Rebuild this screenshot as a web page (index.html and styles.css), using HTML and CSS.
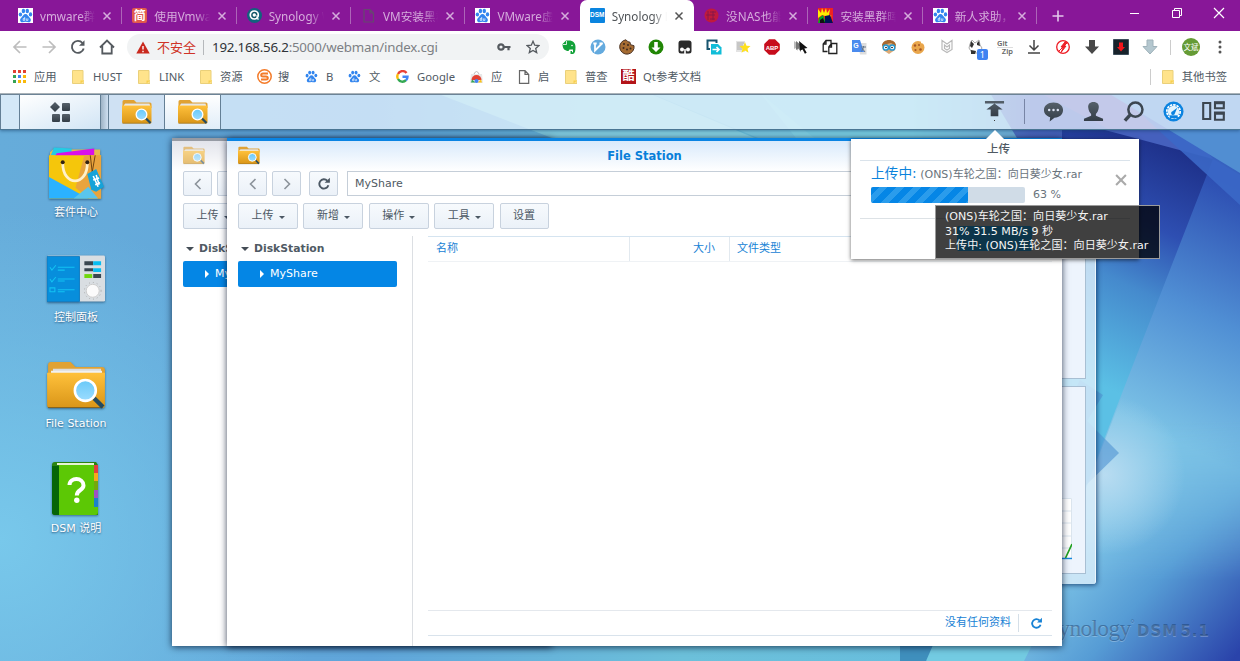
FILE: index.html
```
<!DOCTYPE html>
<html lang="zh-CN">
<head>
<meta charset="utf-8">
<title>Synology DiskStation</title>
<link rel="stylesheet" href="styles.css">
</head>
<body>
<svg class="defs" width="0" height="0">
  <defs>
    <linearGradient id="gold" x1="0" y1="0" x2="0" y2="1"><stop offset="0" stop-color="#ffc13b"/><stop offset="1" stop-color="#d99518"/></linearGradient>
    <linearGradient id="lens" x1="0" y1="0" x2="0" y2="1"><stop offset="0" stop-color="#68c9f8"/><stop offset="1" stop-color="#9cdcff"/></linearGradient>
    <linearGradient id="slate" x1="0" y1="0" x2="0" y2="1"><stop offset="0" stop-color="#55606a"/><stop offset="1" stop-color="#333d47"/></linearGradient>
    <symbol id="folder" viewBox="0 0 60 50">
      <path d="M1 4q0-3 3-3h20l5 5h27q3 0 3 3v8H1z" fill="#e0a234"/>
      <path d="M6 8h49v5H6z" fill="#ddd"/><path d="M4 10h52v4H4z" fill="#f1f1f1"/>
      <path d="M0 12h59v33q0 3-3 3H3q-3 0-3-3z" fill="url(#gold)"/>
      <path d="M1 47.500h56" stroke="#7f6021" stroke-width="1"/>
      <path d="M48 38l9 9" stroke="#244a60" stroke-width="4.5"/>
      <circle cx="39" cy="30" r="10.7" fill="url(#lens)" stroke="#fff" stroke-width="2.6"/>
    </symbol>
    <symbol id="paw" viewBox="0 0 15 15">
      <g fill="#3285ee"><ellipse cx="2.4" cy="6.5" rx="1.7" ry="2.1"/><ellipse cx="5.4" cy="3" rx="1.700" ry="2.2"/><ellipse cx="9.3" cy="3" rx="1.700" ry="2.2"/><ellipse cx="12.5" cy="6.4" rx="1.7" ry="2.1"/>
      <path d="M7.5 6c2 0 2.500 2.200 4 3.400 2.300 1.900 1.500 4.800-.8 4.800-1.100 0-2-.4-3.200-.4s-2.100.4-3.200.4c-2.300 0-3.100-2.900-.8-4.800C5 8.200 5.500 6 7.500 6z"/></g>
      <path d="M6.700 9v3.400h-1.500v-1.800h1.500M8.300 10.400v2h1.600v-2" fill="none" stroke="#fff" stroke-width=".7"/>
    </symbol>
    <symbol id="note" viewBox="0 0 12 14"><path d="M.5.500h10.500v9l1 1v3H.5z" fill="#ffe38b" stroke="#ead07a"/><path d="M8.500 13.500v-3H12" fill="#f8cf4e"/></symbol>
    <symbol id="x" viewBox="0 0 10 10"><path d="M1.500 1.500l7 7m0-7l-7 7" fill="none" stroke="currentColor" stroke-width="1.500"/></symbol>
    <symbol id="reload" viewBox="0 0 16 16"><path d="M13 9.500A5.300 5.300 0 1 1 11.700 4.200" fill="none" stroke="currentColor" stroke-width="2.200"/><path d="M8.700 6.700h6V.8z" fill="currentColor"/></symbol>
  </defs>
</svg>

<header class="browser">
  <div class="tabs">
    <div class="tab"><span class="fav white"><svg><use href="#paw"/></svg></span><span class="ttl">vmware群晖</span><svg class="close"><use href="#x"/></svg></div>
    <div class="tab"><span class="fav jian">简</span><span class="ttl">使用Vmware</span><svg class="close"><use href="#x"/></svg></div>
    <div class="tab"><span class="fav"><svg viewBox="0 0 15 15"><circle cx="7.500" cy="7.500" r="7.500" fill="#12627d"/><circle cx="7.300" cy="7" r="4" fill="#156" stroke="#fff" stroke-width="1.700"/><circle cx="7.300" cy="7" r="1.700" fill="#fff"/><path d="M10 7v4h2" stroke="#fff" fill="none"/></svg></span><span class="ttl">Synology W</span><svg class="close"><use href="#x"/></svg></div>
    <div class="tab"><span class="fav"><svg viewBox="0 0 15 15"><path d="M3 1.500h6l3.500 3.500v9H3zM9 1.500V5h3.500" fill="none" stroke="#66486f" stroke-width="1.200"/></svg></span><span class="ttl">VM安装黑群</span><svg class="close"><use href="#x"/></svg></div>
    <div class="tab nosep"><span class="fav white"><svg><use href="#paw"/></svg></span><span class="ttl">VMware虚拟</span><svg class="close"><use href="#x"/></svg></div>
    <div class="tab active"><span class="fav dsm">DSM</span><span class="ttl">Synology Di</span><svg class="close"><use href="#x"/></svg></div>
    <div class="tab"><span class="fav"><svg viewBox="0 0 15 15"><circle cx="7.500" cy="7.500" r="7" fill="#c01a3c"/><path d="M4 3v9M6 4h6M6 7h5M9 3v9M6 11h5M2 7h4" stroke="#84174a" stroke-width=".9"/></svg></span><span class="ttl">没NAS也能</span><svg class="close"><use href="#x"/></svg></div>
    <div class="tab"><span class="fav"><svg viewBox="0 0 15 15"><path fill="#e22" d="M0 0h15v15H0z"/><path d="M0 1l3 4 1-5 2 5 2-5 1 5 3-4-1 6 3 1-4 1-6-2-4 3z" fill="#fe0"/><path d="M0 15l1-5 4-3 3 8z" fill="#0a2"/><path d="M7 15l0-7 5-1 3 8z" fill="#015"/><path d="M2 15v-3l3-2 2 5z" fill="#111"/></svg></span><span class="ttl">安装黑群晖</span><svg class="close"><use href="#x"/></svg></div>
    <div class="tab"><span class="fav white"><svg><use href="#paw"/></svg></span><span class="ttl">新人求助，c</span><svg class="close"><use href="#x"/></svg></div>
    <svg class="plus" viewBox="0 0 12 12"><path d="M6 .5v11M.5 6h11" stroke="#e2c8ea" stroke-width="1.600"/></svg>
    <div class="winctl">
      <svg viewBox="0 0 12 12"><path d="M1 6.500h9" stroke="#fff"/></svg>
      <svg viewBox="0 0 12 12"><path d="M1.500 3.500h7v7h-7zM3.500 3V1.500h7v7H9" fill="none" stroke="#fff"/></svg>
      <svg viewBox="0 0 12 12"><path d="M1 1l10 10M11 1L1 11" stroke="#fff" stroke-width="1.200"/></svg>
    </div>
  </div>

  <div class="toolbar">
    <div class="nav">
      <svg viewBox="0 0 16 16"><path d="M14.500 8H2.500M8 2L2 8l6 6" fill="none" stroke="#bdbdbd" stroke-width="1.700"/></svg>
      <svg viewBox="0 0 16 16"><path d="M1.500 8h12M8 2l6 6-6 6" fill="none" stroke="#bdbdbd" stroke-width="1.700"/></svg>
      <svg viewBox="0 0 16 16"><path d="M13.700 9.500A6 6 0 1 1 12.500 4" fill="none" stroke="#555a5f" stroke-width="1.900"/><path d="M9 6.800h5.500V1.300z" fill="#555a5f"/></svg>
      <svg viewBox="0 0 16 16"><path d="M1 8.500L8 1.500l7 7M3.300 7v7.500h9.400V7" fill="none" stroke="#555a5f" stroke-width="1.800"/></svg>
    </div>
    <div class="omnibox">
      <svg class="warn" viewBox="0 0 14 13"><path d="M7 .5L13.700 12.500H.3z" fill="#c9291e"/><path d="M7 5v3.500M7 9.700v1.500" stroke="#fff" stroke-width="1.400"/></svg>
      <span class="unsafe">不安全</span><i></i>
      <span class="url"><b>192.168.56.2</b>:5000/webman/index.cgi</span>
      <svg class="key" viewBox="0 0 14 10"><circle cx="4" cy="5" r="2.700" fill="none" stroke="#555a5f" stroke-width="2.200"/><path d="M6.500 5h7M11.500 5v3.200" stroke="#555a5f" stroke-width="2.200"/></svg>
      <svg class="star" viewBox="0 0 14 14"><path d="M7 1.300l1.700 3.900 4.200.4-3.200 2.800 1 4.200L7 10.400l-3.700 2.200 1-4.200L1.100 5.600l4.200-.4z" fill="none" stroke="#555a5f" stroke-width="1.300"/></svg>
    </div>
    <div class="exts">
      <svg viewBox="0 0 16 16"><path d="M1.500 5L5 1.500h3C12 1.500 14.500 4 14.500 8c0 4-.5 6.500-2.500 7H9.500v-3h1.500v1.300h1V10.500H8.500l-1 1.500C4 12 1.500 10 1.500 5z" fill="#12a239"/><path d="M2 5.500h3.500V2" fill="none" stroke="#fff" stroke-width=".8"/><circle cx="11" cy="6.500" r=".8" fill="#fff"/></svg>
      <svg viewBox="0 0 16 16"><circle cx="8" cy="8" r="7.500" fill="#64aade"/><path d="M5 4v7.500L12.500 4M3.300 4.500h3.400M9.500 4.500h3.200" fill="none" stroke="#fff" stroke-width="1.800"/></svg>
      <svg viewBox="0 0 16 16"><path d="M7 .8l2 2 2 .4.500 2.500 3.500 1a7.200 7.200 0 1 1-8-5.900z" fill="#a56b31" stroke="#4c3426"/><g fill="#3e291e"><circle cx="5" cy="5" r="1"/><circle cx="9" cy="6" r="1"/><circle cx="4.500" cy="9" r="1"/><circle cx="8" cy="10.500" r="1"/><circle cx="11.500" cy="9.500" r="1"/></g></svg>
      <svg viewBox="0 0 16 16"><circle cx="8" cy="8" r="7.500" fill="#218605"/><path d="M8 13L3.500 8.500h2.700V3h3.600v5.500h2.700z" fill="#fff"/></svg>
      <svg viewBox="0 0 16 16"><rect x="1.500" y="1.500" width="13" height="13" rx="2.500" fill="#2b2b2b"/><circle cx="5" cy="10.500" r="2" fill="#fff"/><circle cx="11" cy="10.500" r="2" fill="#fff"/><path d="M7.200 10h1.600v5H7.200z" fill="#fff"/></svg>
      <svg viewBox="0 0 16 16"><path d="M4 10H1.500V1.500h9V4" fill="none" stroke="#17546f" stroke-width="2"/><path d="M5 5h7l3.500 3.500v7H5z" fill="#11bdd8"/><path d="M6.500 10.500h6M10.500 8l2.500 2.500-2.500 2.500" stroke="#fff" stroke-width="1.700" fill="none"/></svg>
      <svg viewBox="0 0 16 16"><path d="M1 2h9v11H1z" fill="#e3e3e3"/><path d="M2 4h7M2 6h6M2 8h7M2 10h5" stroke="#aaa"/><path d="M10 3l1.500 3.700 4 .3-3 2.700 1 4L10 11.500 6.500 13.700l1-4-3-2.700 4-.3z" fill="#ffe01b"/></svg>
      <svg viewBox="0 0 16 16"><path d="M5 .2h6L15.800 5v6L11 15.800H5L.2 11V5z" fill="#c70d1c"/><text x="8" y="10.600" class="abp">ABP</text></svg>
      <svg viewBox="0 0 16 16"><path d="M1 2v8l2-1 2 3V5z" fill="#bbb"/><path d="M3 2v9l2.200-1.500L8 13V6z" fill="#777"/><path d="M6 2l8.500 7-3.200.4 2.400 4.300-1.800 1-2.300-4.300-2.400 1z" fill="#111"/></svg>
      <svg viewBox="0 0 16 16"><path d="M5.500 12.500H1.200V5L4 1.500h5v3M4 1.500V5H1.200M6.800 8l2.700-3.500h5.300v10h-8zM9.500 4.500V8H6.800" fill="none" stroke="#222" stroke-width="1.300"/></svg>
      <svg viewBox="0 0 16 16"><path d="M7 4h8.500v11.500H9z" fill="#ddd"/><path d="M1 1h8l4 12H1z" fill="#4a8bee"/><text x="5" y="9" class="tr">G</text><path d="M10 8h5M12.500 7v1.500l-2 4M11 9l3 4" stroke="#678" fill="none"/></svg>
      <svg viewBox="0 0 16 16"><path d="M1 7C1 0 15 0 15 7l-1 4-6 4-6-4z" fill="#dcaa76"/><path d="M1 7C1-1 15-1 15 7l-5-3-4 1z" fill="#a8692f"/><circle cx="4.800" cy="8.500" r="2.600" fill="#fff" stroke="#2496cf" stroke-width="1.500"/><circle cx="11.200" cy="8.500" r="2.600" fill="#fff" stroke="#2496cf" stroke-width="1.500"/><circle cx="5" cy="8.500" r=".8"/><circle cx="11" cy="8.500" r=".8"/></svg>
      <svg viewBox="0 0 16 16"><circle cx="8" cy="8.500" r="6.500" fill="#e9a64b"/><circle cx="12.500" cy="3" r="1.600" fill="#fff"/><g fill="#a75624"><circle cx="5" cy="6.500" r="1.200"/><circle cx="9" cy="6" r="1"/><circle cx="5.500" cy="11" r="1.100"/><circle cx="10.500" cy="10.500" r="1.300"/></g></svg>
      <svg viewBox="0 0 16 16"><path d="M3 1.500l5 3.500 5-3.500v9L8 13.500l-5-3zM5.500 6v3.500L8 11l2.500-1.500V6L8 8z" fill="none" stroke="#b9b9b9" stroke-width="1.200"/></svg>
      <span class="badged"><svg viewBox="0 0 16 16"><path d="M2 5l2-4 3 3 4-3 1 5 2 3-3 5H4L1 9z" fill="#fff" stroke="#aaa"/><path d="M3 2l3 3-2 4-2-2zM9 4l2-2 1 5-3-1zM3 11l5 1-1 3H3z" fill="#333"/></svg><em>1</em></span>
      <span class="gitzip"><u>Git</u><u>Zip</u></span>
      <svg viewBox="0 0 16 16"><path d="M8 1v9.500M3.500 6.500L8 11l4.500-4.500M2 14h12" fill="none" stroke="#444" stroke-width="1.500"/></svg>
      <svg viewBox="0 0 16 16"><circle cx="8" cy="8" r="6.300" fill="#fff" stroke="#ee1c24" stroke-width="1.300"/><path d="M10 3L6 8h2.500L6 13.500 11 7H8.500l3-4zM3.500 12.500l9-9" fill="#ee1c24" stroke="#ee1c24"/></svg>
      <svg viewBox="0 0 16 16"><path d="M5 1h6v6.500h4L8 15 1 7.500h4z" fill="#484848"/></svg>
      <svg viewBox="0 0 16 16"><path fill="#18222b" stroke="#3c4d5a" d="M.5.500h15v15H.5z"/><path d="M6 3.500h4V8h2l-4 4.500L4 8h2z" fill="#f3151b"/></svg>
      <svg viewBox="0 0 16 16"><path d="M5 1h6v6.500h4L8 15 1 7.500h4z" fill="#b4c7cf" stroke="#9fb2ba"/></svg>
    </div>
    <i class="bar"></i>
    <span class="avatar">文斌</span>
    <svg class="dots" viewBox="0 0 4 14"><g fill="#555"><circle cx="2" cy="2" r="1.500"/><circle cx="2" cy="7" r="1.500"/><circle cx="2" cy="12" r="1.500"/></g></svg>
  </div>

  <nav class="marks">
    <a class="w59"><svg viewBox="0 0 13 13"><path d="M0 0h3v3H0zM5 0h3v3H5zM10 0h3v3h-3z" fill="#e34133"/><path d="M0 5h3v3H0z" fill="#35a353"/><path d="M5 5h3v3H5z" fill="#4284f3"/><path d="M10 5h3v3h-3zM5 10h3v3H5zM10 10h3v3h-3z" fill="#f9b90a"/><path d="M0 10h3v3H0z" fill="#35a353"/></svg><span>应用</span></a>
    <a class="w66"><svg class="nt"><use href="#note"/></svg><span class="far">HUST</span></a>
    <a class="w62"><svg class="nt"><use href="#note"/></svg><span class="far">LINK</span></a>
    <a class="w57"><svg class="nt"><use href="#note"/></svg><span>资源</span></a>
    <a class="w48"><svg class="big" viewBox="0 0 15 15"><circle cx="7.500" cy="7.500" r="6.700" fill="#fff" stroke="#f47b29" stroke-width="1.500"/><path d="M11 4.500H6q-1.800 0-1.800 1.500T6 7.500h3q1.800 0 1.800 1.500T9 10.500H4" fill="none" stroke="#f47b29" stroke-width="2"/></svg><span class="near">搜</span></a>
    <a class="w43"><svg><use href="#paw"/></svg><span>B</span></a>
    <a class="w48"><svg><use href="#paw"/></svg><span>文</span></a>
    <a class="w74"><svg viewBox="0 0 13 13"><g fill="none" stroke-width="2.400"><path d="M2 4A5 5 0 0 1 10.500 3" stroke="#ea4335"/><path d="M2 4a5 5 0 0 0 0 5" stroke="#fbbc05"/><path d="M2 9a5 5 0 0 0 8 1.200" stroke="#34a853"/><path d="M10 10.300A5 5 0 0 0 11.500 6.700H6.500" stroke="#4285f4"/></g></svg><span>Google</span></a>
    <a class="w48"><svg viewBox="0 0 13 13"><path d="M1 4h11l1 9H0z" fill="#e8e8e8"/><path d="M4 4q2.500-5 5 0" fill="none" stroke="#bbb"/><path d="M1.500 10a5 5 0 0 1 10 0z" fill="#e34133"/><path d="M1 12.500l1-3 3.500 3z" fill="#35a353"/><path d="M12 12.500l-1-3-3.500 3z" fill="#fbc116"/><circle cx="6.500" cy="11" r="2" fill="#4284f3"/></svg><span>应</span></a>
    <a class="w47"><svg class="nt" viewBox="0 0 12 14"><path d="M1.500.7h5.500l3.700 3.700v9H1.500zM7 .7v3.700h3.700" fill="none" stroke="#666" stroke-width="1.200"/></svg><span>启</span></a>
    <a class="w56"><svg class="nt"><use href="#note"/></svg><span>普查</span></a>
    <a class="ku"><b>酷</b><span>Qt参考文档</span></a>
    <a class="other"><svg class="nt"><use href="#note"/></svg><span>其他书签</span></a>
  </nav>
</header>

<main class="desktop">
  <svg class="wall" viewBox="0 93 1240 568" preserveAspectRatio="none">
    <defs>
      <linearGradient id="w0" x1="0" y1="0" x2="1" y2="0"><stop offset="0" stop-color="#66acda"/><stop offset=".3" stop-color="#60a5da"/><stop offset=".55" stop-color="#6cc0da"/><stop offset=".73" stop-color="#68bedd"/><stop offset=".83" stop-color="#4864bb"/><stop offset="1" stop-color="#2c49aa"/></linearGradient>
      <radialGradient id="w1" gradientUnits="userSpaceOnUse" cx="0" cy="540" r="330"><stop offset="0" stop-color="#78c8eb"/><stop offset="1" stop-color="#78c8eb" stop-opacity="0"/></radialGradient>
      <linearGradient id="w2" gradientUnits="userSpaceOnUse" x1="1200" y1="150" x2="1090" y2="380"><stop offset="0" stop-color="#1c2d85"/><stop offset=".35" stop-color="#2e4fb2"/><stop offset=".6" stop-color="#458acd"/><stop offset="1" stop-color="#5bc0e5"/></linearGradient>
      <linearGradient id="w3" gradientUnits="userSpaceOnUse" x1="1240" y1="190" x2="1130" y2="420"><stop offset="0" stop-color="#2d4eb2"/><stop offset=".5" stop-color="#508fd4"/><stop offset="1" stop-color="#7cc3e6"/></linearGradient>
      <linearGradient id="w4" gradientUnits="userSpaceOnUse" x1="1100" y1="510" x2="1250" y2="640"><stop offset="0" stop-color="#80c7e8"/><stop offset=".45" stop-color="#569cd5"/><stop offset="1" stop-color="#2a43aa"/></linearGradient>
      <linearGradient id="fade" gradientUnits="userSpaceOnUse" x1="0" y1="420" x2="0" y2="580"><stop offset="0" stop-color="#000"/><stop offset="1" stop-color="#fff"/></linearGradient>
      <mask id="m4"><path d="M900 93h340v568H900z" fill="url(#fade)"/></mask>
      <radialGradient id="w5" gradientUnits="userSpaceOnUse" cx="1105" cy="475" r="80"><stop offset="0" stop-color="#b8dcf1"/><stop offset="1" stop-color="#b8dcf1" stop-opacity="0"/></radialGradient>
    </defs>
    <path d="M0 93h1240v568H0z" fill="url(#w0)"/>
    <path d="M0 93h500v568H0z" fill="url(#w1)"/>
    <path d="M436 93h212l260 110H720z" fill="#8ed8e6" opacity=".7"/>
    <path d="M650 93h110l60 50H770z" fill="#8ad3e5" opacity=".5"/>
    <path d="M760 93h230l30 50H800z" fill="#84d8e8" opacity=".6"/>
    <path d="M1062 129h178v540h-178z" fill="url(#w2)"/>
    <path d="M1030 93h130l53 66-123-33-60 4z" fill="#4560bd"/>
    <path d="M1213 159L1030 630l-50 31h260V175z" fill="url(#w3)"/>
    <path d="M1213 159L1030 630l-50 31h260V175z" fill="url(#w4)" mask="url(#m4)"/>
    <path d="M1183 240L1062 550v111h178V240z" fill="url(#w5)"/>
    <path d="M1040 93h75l45 36-50 1z" fill="#7a5fb2" opacity=".45"/>
    <path d="M1118 93h122v112z" fill="#3b68c6" opacity=".9"/>
    <path d="M1108 93h132v80z" fill="#518ed2"/>
    <path d="M1080 380l23 15-16 26 32 32-39 38-30-50z" fill="#4e93d2" opacity=".6"/>
    <path d="M900 645h132l-8 16h-97z" fill="#73cbe2"/><path d="M900 645h33l-7 16h-26z" fill="#3f8fbd"/>
  </svg>

  <div class="taskbar">
    <span class="slot s1"></span>
    <span class="slot menu"><svg viewBox="0 0 20 20"><g fill="url(#slate)"><path d="M5 0l5 5-5 5-5-5z"/><rect x="12" y="1" width="8" height="8" rx="1"/><rect x="2" y="12" width="8" height="8" rx="1"/><rect x="12" y="12" width="8" height="8" rx="1"/></g></svg></span>
    <span class="slot gap"></span>
    <span class="slot app"><svg><use href="#folder"/></svg></span>
    <span class="slot app on"><svg><use href="#folder"/></svg></span>
    <div class="tray">
      <svg viewBox="0 0 22 22"><path d="M1 0h20v2.500H1zM11 2.500l8.500 6.500H15v7H7V9H2.500z" fill="url(#slate)"/><path d="M10.500 20h1v1h-1z" fill="#333"/></svg>
      <i></i>
      <svg viewBox="0 0 22 22"><path d="M11 1.500c6 0 10 3.300 10 8s-3.500 7.700-9 8L7 21.500l.5-4.500C3.500 16 1 13 1 9.500c0-4.700 4-8 10-8z" fill="url(#slate)"/><g fill="#dce2f2"><circle cx="6.500" cy="9.500" r="1.300"/><circle cx="11" cy="9.500" r="1.300"/><circle cx="15.500" cy="9.500" r="1.300"/></g></svg>
      <svg viewBox="0 0 22 22"><path d="M11 1c4 0 6 2.500 5.500 6-.4 3-1.500 5-3 6.500v2l7.500 3V21H1v-2.500l7.500-3v-2C7 12 5.900 10 5.500 7 5 3.500 7 1 11 1z" fill="url(#slate)"/></svg>
      <svg viewBox="0 0 22 22"><circle cx="13" cy="9" r="7.400" fill="none" stroke="#3c4650" stroke-width="2.600"/><path d="M8 14l-6 6.500" stroke="#3c4650" stroke-width="3.600"/></svg>
      <svg viewBox="0 0 22 22"><circle cx="11" cy="11" r="10.500" fill="#0b83e0"/><circle cx="11" cy="11" r="7" fill="none" stroke="#fff" stroke-width="1.800" stroke-dasharray="2.600 1"/><circle cx="11" cy="11" r="6" fill="#e5f4fd"/><path d="M15 7l-2.500 5.800a2 2 0 1 1-2.500-2z" fill="#0b83e0"/><path d="M7 15h8v3H7z" fill="#0b83e0"/></svg>
      <svg class="wide" viewBox="0 0 24 22"><path d="M2.200 3h7v16h-7zM14 2.200h8.800v6H14zM14 12.500h8.800v7.300H14z" fill="none" stroke="#3c4650" stroke-width="2.100"/><path d="M13 3h10.500M13 13.500h10.500" stroke="#3c4650" stroke-width="2.400"/></svg>
    </div>
  </div>

  <div class="icons">
    <figure class="f1"><svg viewBox="0 0 60 56"><path d="M3 6l3-3h48v7H3z" fill="#e7ba4d"/><path d="M7 1l18 1v7H4z" fill="#25cbe4"/><path d="M10 7l38-5v8H8z" fill="#d90fea"/><path d="M2 9h53v44H2z" fill="#f5c60b"/><path d="M38 9h17v44H43L29 42z" fill="#e9a43d"/><path d="M2 31l40 22H2z" fill="#2bb2ff"/><path d="M27 53L42 41l10 12z" fill="#59c5ed"/><path d="M16 17c0 24 25 24 25 0" fill="none" stroke="#fff1cb" stroke-width="2.800"/><circle cx="16" cy="16" r="2" fill="#321"/><circle cx="41" cy="16" r="2" fill="#321"/><path d="M44 9l2 17 3-17" fill="none" stroke="#70430e"/><path d="M41 28l9-5 8 18-8 5-5-2z" fill="#14a3d9"/><path d="M47 30l5 11M50 29l3 10M47 34l6-2M49 39l5-2" stroke="#fff" stroke-width="1.600"/></svg><figcaption>套件中心</figcaption></figure>
    <figure class="f2"><svg viewBox="0 0 60 48"><rect width="59" height="47" rx="1.500" fill="#d9dee2"/><path d="M0 1h33v46H0z" fill="#078edc"/><path d="M0 1h33v46H0z" fill="none" stroke="#0d7bc1"/><path d="M3 12l2 3 4-5M3 24l2 3 4-5M3 33h5v4H3zM11 12h17M11 15h7M11 24h17M11 26h7M11 35h17M11 37h7" fill="none" stroke="#13c2f2" stroke-width="1.100"/><path d="M38 6h9v4h-9zM38 13h9v3h-9zM47 19h8v4h-8z" fill="#3a4750"/><path d="M47 6h8v4h-8zM47 13h8v4h-8z" fill="#08bdf1"/><path d="M38 19h8v4h-8z" fill="#70d80e"/><circle cx="46.500" cy="36" r="8.500" fill="none" stroke="#aaa" stroke-dasharray="1 3"/><circle cx="46.500" cy="36" r="6.600" fill="#fbfbfb" stroke="#ccc"/></svg><figcaption>控制面板</figcaption></figure>
    <figure class="f3"><svg><use href="#folder"/></svg><figcaption>File Station</figcaption></figure>
    <figure class="f4"><svg viewBox="0 0 48 54"><path d="M0 3q0-3 3-3h41l2 3v50H3q-3 0-3-3z" fill="#2c8410"/><path d="M5 1h37v2H5z" fill="#e6f3d5"/><path d="M0 4h7v49H3q-3 0-3-3z" fill="#066507"/><path d="M7 3h35v41h4v6q0 3-3 3H7z" fill="#5cc805"/><path d="M42 3h4v8h-4z" fill="#e33e3e"/><path d="M42 11h4v8h-4z" fill="#f5a91c"/><path d="M42 19h4v9h-4z" fill="#75a80c"/><path d="M42 28h4v8h-4z" fill="#9d54c3"/><path d="M42 36h4v9h-4z" fill="#1b82cb"/><path d="M17.500 23c0-8 14-8 14 .5 0 5-6.700 4-6.700 10" fill="none" stroke="#fff" stroke-width="4"/><circle cx="24.800" cy="38.300" r="2.700" fill="#fff"/></svg><figcaption>DSM 说明</figcaption></figure>
  </div>

  <div class="brand"><span class="syno">Synology<sup>°</sup></span><span class="ver">DSM 5.1</span></div>

  <div class="widget"><div class="card c1"></div><div class="card c2"><svg viewBox="0 0 30 62"><path d="M0 0h30v62H0z" fill="#fff"/><path d="M0 .5h29.500V61M0 13h30M0 25h30M0 38h30M0 50h30" fill="none" stroke="#dce6ef"/><path d="M0 60.500h30" stroke="#1688dd" stroke-width="1.500"/><path d="M23.500 60L30 46" stroke="#21a221" stroke-width="1.700"/></svg></div></div>

  <section class="window back">
    <div class="titlebar"><svg><use href="#folder"/></svg></div>
    <div class="row path"><button><svg viewBox="0 0 14 14"><path d="M9.500 2L4.500 7l5 5" fill="none" stroke="currentColor" stroke-width="1.600"/></svg></button><button></button></div>
    <div class="row acts"><button class="dd">上传<i></i></button></div>
    <div class="tree"><div class="root"><i></i>DiskStation</div><div class="leaf"><i></i>MyShare</div></div>
  </section>

  <section class="window front">
    <div class="titlebar"><svg><use href="#folder"/></svg><h1>File Station</h1></div>
    <div class="row path">
      <button><svg viewBox="0 0 14 14"><path d="M9.500 2L4.500 7l5 5" fill="none" stroke="currentColor" stroke-width="1.600"/></svg></button>
      <button><svg viewBox="0 0 14 14"><path d="M4.500 2l5 5-5 5" fill="none" stroke="currentColor" stroke-width="1.600"/></svg></button>
      <button class="rel"><svg><use href="#reload"/></svg></button>
      <div class="field">MyShare</div>
    </div>
    <div class="row acts"><button class="dd">上传<i></i></button><button class="dd">新增<i></i></button><button class="dd">操作<i></i></button><button class="dd">工具<i></i></button><button class="set">设置</button></div>
    <div class="content">
      <div class="tree"><div class="root"><i></i>DiskStation</div><div class="leaf"><i></i>MyShare</div></div>
      <div class="list">
        <div class="head"><span class="n">名称</span><span class="s">大小</span><span class="t">文件类型</span></div>
        <div class="empty"></div>
        <div class="foot"><span>没有任何资料</span><i></i><svg><use href="#reload"/></svg></div>
      </div>
    </div>
  </section>

  <aside class="upload">
    <h2>上传</h2>
    <div class="task">
      <div class="info"><p><strong>上传中:</strong> (ONS)车轮之国：向日葵少女.rar</p>
      <div class="prog"><div class="track"><div class="fill" style="width:63%"></div></div><span>63 %</span></div></div>
      <svg class="cancel"><use href="#x"/></svg>
    </div>
  </aside>
  <div class="tip"><span class="under"></span><div>(ONS)车轮之国：向日葵少女.rar</div><div>31% 31.5 MB/s 9 秒</div><div>上传中: (ONS)车轮之国：向日葵少女.rar</div></div>
</main>
</body>
</html>
```
FILE: styles.css
```
* { box-sizing: border-box; }
body { margin: 0; width: 1240px; height: 661px; overflow: hidden; font: 12px/16px "Noto Sans", "Noto Sans CJK SC", sans-serif; color: #505a64; }
svg { display: block; flex: none; }
i, em { font-style: normal; }
.defs { position: absolute; }

/* browser chrome */
.browser { height: 94px; background: #fff; border-bottom: 1px solid #a9b2b8; }
.tabs { display: flex; height: 31px; background: #881798; padding-left: 8px; }
.tab { display: flex; align-items: center; width: 114.35px; padding: 0 10px; position: relative; color: #d5acdc; }
.tab::after { content: ""; position: absolute; right: 0; top: 7px; width: 1px; height: 17px; background: #ad65b8; }
.tab.nosep::after, .tab.active::after { display: none; }
.tab.active { background: #fff; color: #555; border-radius: 7px 7px 0 0; }
.tab.active .ttl { color: #505458; }
.fav { width: 15px; height: 15px; flex: none; font-size: 12px; line-height: 15px; text-align: center; overflow: hidden; }
.fav svg { width: 15px; height: 15px; }
.fav.white { background: #fff; }
.fav.jian { background: #e1594c; color: #fff; border-radius: 2px; font-weight: 600; }
.fav.dsm { background: #0a84df; color: #fff; font: bold 6.5px/14px "Liberation Sans", sans-serif; border-radius: 1px; }
.ttl { width: 57px; margin-left: 7px; overflow: hidden; white-space: nowrap; font-size: 11.7px; -webkit-mask-image: linear-gradient(90deg, #000 74%, transparent); mask-image: linear-gradient(90deg, #000 74%, transparent); }
.close { width: 10px; height: 10px; margin-left: 7px; color: inherit; }
.plus { width: 12px; height: 12px; margin: 10px 0 0 15px; }
.winctl { display: flex; gap: 30px; margin: 7px 15px 0 auto; }
.winctl svg { width: 12px; height: 12px; }
.toolbar { display: flex; align-items: center; height: 32px; padding-left: 12px; }
.nav { display: flex; gap: 13px; }
.nav svg { width: 16px; height: 16px; }
.omnibox { display: flex; align-items: center; width: 422px; height: 26px; margin-left: 12px; padding: 0 9px 0 9px; border-radius: 13px; background: #f1f3f4; font-size: 13px; }
.warn { width: 14px; height: 13px; }
.unsafe { margin-left: 7px; color: #cf3327; width: 39px; }
.omnibox i { width: 1px; height: 15px; background: #b5b8bb; margin: 0 8px 0 7px; }
.url { color: #7c8084; font-size: 13.3px; letter-spacing: -.21px; }
.url b { font-weight: 400; color: #303438; }
.key { width: 14px; height: 10px; margin-left: auto; }
.star { width: 14px; height: 14px; margin-left: 15px; }
.exts { display: flex; margin-left: 5px; }
.exts > * { width: 16px; height: 16px; margin: 0 6.55px; flex: none; }
.abp { font: bold 6px "Liberation Sans", sans-serif; fill: #fff; text-anchor: middle; }
.tr { font: bold 7px "Liberation Sans", sans-serif; fill: #fff; text-anchor: middle; }
.badged { position: relative; }
.badged em { position: absolute; left: 9px; top: 10px; width: 11px; height: 11px; background: #3f83f1; color: #fff; border-radius: 2px; font: 9px/11px "Noto Sans", sans-serif; text-align: center; }
.badged svg { width: 16px; height: 16px; }
.gitzip { font: 600 7.500px/8px "Noto Sans", sans-serif; color: #666; }
.gitzip u { display: block; text-decoration: none; }
.gitzip u + u { text-align: right; border-top: 1px solid #ddd; line-height: 7px; }
.bar { width: 1px; height: 15px; background: #ccc; margin-left: 5px; }
.avatar { width: 18px; height: 18px; margin-left: 11px; border-radius: 50%; background: #659b35; color: #fff; font-size: 7.5px; line-height: 18px; text-align: center; white-space: nowrap; }
.dots { width: 4px; height: 14px; margin-left: 18px; }
.marks { display: flex; align-items: center; height: 27px; padding: 0 13px 0 13px; font-size: 11.3px; }
.marks a { display: flex; align-items: center; white-space: nowrap; flex: none; }
.marks svg { width: 13px; height: 13px; }
.marks svg.nt { width: 12px; height: 14px; }
.marks svg.big { width: 15px; height: 15px; }
.marks span { margin-left: 8px; }
.marks .near { margin-left: 6px; }
.marks .far { margin-left: 9px; }
.w43 { width: 43px; } .w47 { width: 47px; } .w48 { width: 48px; } .w56 { width: 56px; } .w57 { width: 57px; } .w59 { width: 59px; } .w62 { width: 62px; } .w66 { width: 66px; } .w74 { width: 74px; }
.ku b { width: 15px; height: 15px; background: #b31519; color: #fff; font-size: 12px; line-height: 14px; text-align: center; }
.ku span { margin-left: 7px; }
.marks .other { margin-left: auto; border-left: 1px solid #ccc; padding-left: 11px; }

/* desktop */
.desktop { position: relative; height: 567px; overflow: hidden; font-family: "DejaVu Sans", "Noto Sans CJK SC", sans-serif; }
.wall { position: absolute; left: 0; top: -1px; width: 1240px; height: 568px; }
.taskbar { position: relative; display: flex; height: 36px; background: rgba(240,246,255,.7); border-top: 1px solid #6c8396; border-bottom: 1px solid #4b7795; box-shadow: 0 1px 3px rgba(20,60,100,.5); }
.slot { display: flex; align-items: center; justify-content: center; border-right: 1px solid #647f95; }
.s1 { width: 20px; border-left: 1px solid #647f95; background: rgba(255,255,255,.25); }
.menu { width: 81px; background: linear-gradient(160deg, #fff, #d2e5f5); }
.menu svg { width: 20px; height: 20px; margin-right: 1px; margin-bottom: 1px; }
.gap { width: 8px; background: linear-gradient(90deg, #9eb3c5, #cfe0f1); }
.app { width: 56px; background: #cfe1f3; }
.app.on { background: linear-gradient(#fff, #e0edf8); }
.app svg { width: 30px; height: 26px; margin-bottom: 1px; }
.tray { display: flex; align-items: center; margin-left: auto; padding: 0 15px 2px 0; }
.tray svg { width: 21px; height: 21px; margin-right: 19px; }
.tray svg.wide { width: 24px; height: 22px; margin-right: 0; }
.tray svg:nth-last-child(2) { margin-right: 17px; }
.tray i { width: 1px; height: 25px; background: #7885a5; margin-right: 18px; }
.icons { position: absolute; left: 26px; top: 37px; width: 100px; }
.icons figure { display: flex; flex-direction: column; align-items: center; justify-content: flex-end; margin: 0; height: 105.3px; padding-bottom: 15px; }
.icons figure:first-child { height: 105px; }
.icons figcaption { color: #fff; font-size: 11px; line-height: 16px; text-shadow: 0 1px 2px rgba(20,60,100,.8); white-space: nowrap; }
.icons svg { width: 59px; height: 48px; margin-bottom: 7px; filter: drop-shadow(0 1px 1px rgba(0,30,60,.5)); }
.icons .f1 svg { height: 56px; margin-bottom: 3px; }
.icons .f3 svg { height: 49px; margin-bottom: 6px; }
.icons .f4 svg { width: 48px; height: 54px; margin-bottom: 5px; }
.brand { position: absolute; left: 1046px; top: 519px; display: flex; align-items: baseline; color: rgba(28,65,110,.5); text-shadow: 0 1px 0 rgba(255,255,255,.25); }
.syno { font: 23.500px/30px "Liberation Serif", serif; letter-spacing: -.7px; width: 91px; white-space: nowrap; }
.syno sup { font-size: 10px; line-height: 0; }
.ver { font: bold 15px/20px "DejaVu Sans", sans-serif; letter-spacing: 1px; word-spacing: -4px; white-space: nowrap; }
.widget { position: absolute; left: 1000px; top: 50px; width: 96px; height: 440px; padding: 10px 9px; background: rgba(220,238,250,.82); border-right: 1px solid #edf6fc; border-radius: 0 0 3px 0; box-shadow: 1px 1px 5px rgba(0,30,80,.7); }
.card { border: 1px solid #a8bfd3; background: #edf4fd; }
.c1 { height: 225px; }
.c2 { display: flex; justify-content: flex-end; height: 188px; margin-top: 7px; padding: 111px 13px 0 0; }
.c2 svg { width: 30px; height: 62px; }

/* file manager windows */
.window { position: absolute; top: 44px; height: 508px; background: #fff; border-top: 3px solid #0a84e3; box-shadow: 0 1px 7px rgba(0,15,40,.75); padding-left: 11px; display: flex; flex-direction: column; }
.front { left: 227px; width: 835px; }
.back { left: 172px; width: 380px; border-top-color: #969ba4; }
.titlebar { display: flex; align-items: flex-start; height: 30px; margin-left: -11px; padding: 5px 0 0 11px; background: linear-gradient(#d9eafb, #fff); }
.back .titlebar { background: linear-gradient(#e2e4eb, #fff); }
.titlebar svg { width: 22px; height: 19px; }
.back .titlebar svg { opacity: .6; }
.titlebar h1 { flex: 1; margin: 1px 33px 0 0; text-align: center; font: bold 11.5px/18px "DejaVu Sans", sans-serif; color: #087fd9; }
.row { display: flex; flex: none; }
button { display: flex; align-items: center; justify-content: center; height: 26px; padding: 0; border: 1px solid #c8d2de; border-radius: 2px; background: linear-gradient(#f7fafd, #ebf1f8); color: #4c5864; font: 11px/16px "DejaVu Sans", "Noto Sans CJK SC", sans-serif; }
.path { gap: 5px; height: 32px; }
.path button { width: 29px; height: 25px; color: #8c939b; }
.path button svg { width: 14px; height: 14px; }
.path .rel { margin-left: 3px; color: #4c5864; }
.path .field { flex: 1; margin: 0 10px 0 4px; height: 25px; border: 1px solid #c5ced8; padding-left: 7px; font-size: 11px; line-height: 23px; }
.acts { gap: 5.400px; }
.dd { width: 60px; flex: none; }
.dd i { border: 3px solid transparent; border-top-color: #4c5864; border-bottom: 0; margin: 2px 0 0 5px; }
.set { width: 49px; }
.content { display: flex; flex: 1; margin-top: 7px; }
.back .tree { margin-top: 7px; border: 0; }
.tree { width: 175px; border-right: 1px solid #dcdfe3; font-size: 11px; }
.root { display: flex; align-items: center; height: 25px; padding-left: 3px; font-weight: bold; font-size: 10.800px; }
.root i { border: 4px solid transparent; border-top-color: #444d56; border-bottom: 0; margin-right: 5px; }
.leaf { display: flex; align-items: center; width: 159px; height: 26px; padding-left: 22px; background: #0486e5; color: #fff; border-radius: 2px; }
.leaf i { border: 4px solid transparent; border-left-color: #fff; border-right: 0; margin-right: 6px; }
.list { flex: 1; display: flex; flex-direction: column; margin: 0 10px 0 15px; color: #1782d5; font-size: 11px; }
.head { display: flex; height: 26px; line-height: 24px; border-top: 1px solid #d5e4f0; border-bottom: 1px solid #eff2f5; }
.head .n { width: 202px; padding-left: 8px; border-right: 1px solid #e2e9ef; }
.head .s { width: 100px; padding-right: 14px; text-align: right; border-right: 1px solid #e2e9ef; }
.head .t { padding-left: 7px; }
.empty { flex: 1; }
.foot { display: flex; align-items: center; justify-content: flex-end; height: 26px; margin-bottom: 10px; padding-right: 9px; border-top: 1px solid #e4e8ed; border-bottom: 1px solid #d9e3ec; }
.foot i { width: 1px; height: 18px; background: #d5dfe8; margin: 0 11px 0 7px; }
.foot svg { width: 13px; height: 13px; }

/* upload popover */
.upload { position: absolute; left: 851px; top: 45px; width: 288px; height: 120px; background: #fff; padding: 0 9px; box-shadow: 0 1px 4px rgba(0,0,0,.6); font-size: 11px; color: #69737c; }
.upload::before { content: ""; position: absolute; left: 135px; top: -9px; border: 9px solid transparent; border-top: 0; border-bottom-color: #fff; }
.upload h2 { height: 22px; margin: 0; border-bottom: 1px solid #dae3eb; text-align: center; font-size: 11.500px; line-height: 21px; font-weight: 500; color: #505a64; padding-left: 7px; }
.task { display: flex; height: 58px; padding: 4px 2px 0 11px; border-bottom: 1px solid #dde2e6; }
.task p { margin: 0; height: 22px; line-height: 17px; white-space: nowrap; }
.task strong { font-weight: 400; font-size: 13.7px; color: #0c83dc; }
.prog { display: flex; align-items: center; gap: 8px; }
.track { width: 154px; height: 16px; background: #d0dce7; border-radius: 2px; overflow: hidden; }
.fill { height: 100%; background: repeating-linear-gradient(135deg, #0586e6 0 6px, #2a9cec 6px 12px); }
.cancel { width: 14px; height: 14px; color: #aaa; margin: 8px 0 0 auto; }
.tip { position: absolute; left: 935px; top: 111px; width: 225px; height: 54px; padding: 4px 9px; border: 1px solid #9b9b9b; background: rgba(0,0,0,.75); color: #f5f5f5; font-size: 11.080px; line-height: 14.600px; white-space: nowrap; }
.tip div { position: relative; }
.under { position: absolute; left: 21px; top: 20px; width: 75px; height: 25px; background: #0c354a; border-radius: 2px; }
```
